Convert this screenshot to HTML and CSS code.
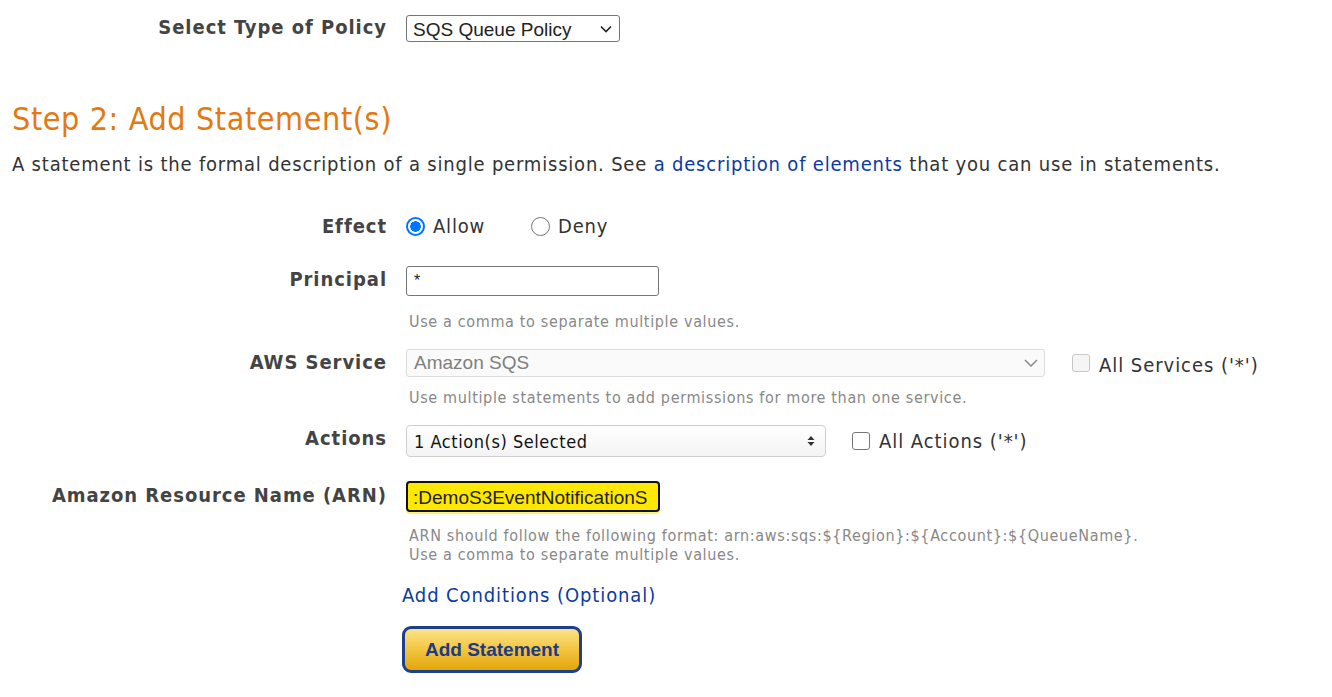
FILE: index.html
```html
<!DOCTYPE html>
<html lang="en">
<head>
<meta charset="utf-8">
<title>AWS Policy Generator</title>
<link rel="stylesheet" href="styles.css">
</head>
<body>
<div class="page">
  <div class="row row-type">
    <div class="label">Select Type of Policy</div>
    <div class="field">
      <div class="select select-type">
        <span>SQS Queue Policy</span>
        <svg class="chev" width="12" height="8" viewBox="0 0 12 8"><path d="M1 1.5 L6 6.5 L11 1.5" fill="none" stroke="#222" stroke-width="1.6"/></svg>
      </div>
    </div>
  </div>

  <h2 class="step">Step 2: Add Statement(s)</h2>
  <p class="desc">A statement is the formal description of a single permission. See <a class="link" href="#">a description of elements</a> that you can use in statements.</p>

  <div class="row row-effect">
    <div class="label">Effect</div>
    <div class="field radios">
      <span class="radio-item"><span class="radio checked"></span><span>Allow</span></span>
      <span class="radio-item deny"><span class="radio"></span><span>Deny</span></span>
    </div>
  </div>

  <div class="row row-principal">
    <div class="label">Principal</div>
    <div class="field">
      <div class="input input-principal">*</div>
      <div class="help help-principal">Use a comma to separate multiple values.</div>
    </div>
  </div>

  <div class="row row-service">
    <div class="label">AWS Service</div>
    <div class="field">
      <div class="inline">
        <div class="select select-service">
          <span>Amazon SQS</span>
          <svg class="chev" width="14" height="8" viewBox="0 0 14 8"><path d="M1 1 L7 7 L13 1" fill="none" stroke="#8a8a8a" stroke-width="1.5"/></svg>
        </div>
        <span class="check-item services"><span class="checkbox disabled"></span><span>All Services ('*')</span></span>
      </div>
      <div class="help help-service">Use multiple statements to add permissions for more than one service.</div>
    </div>
  </div>

  <div class="row row-actions">
    <div class="label">Actions</div>
    <div class="field">
      <div class="inline">
        <div class="select select-actions">
          <span>1 Action(s) Selected</span>
          <svg class="updown" width="8" height="12" viewBox="0 0 8 12"><path d="M4 1 L7.5 5 L0.5 5 Z M4 11 L7.5 7 L0.5 7 Z" fill="#333"/></svg>
        </div>
        <span class="check-item actions"><span class="checkbox"></span><span>All Actions ('*')</span></span>
      </div>
    </div>
  </div>

  <div class="row row-arn">
    <div class="label">Amazon Resource Name (ARN)</div>
    <div class="field">
      <div class="input input-arn"><span>:DemoS3EventNotificationS</span></div>
      <div class="help help-arn">ARN should follow the following format: arn:aws:sqs:${Region}:${Account}:${QueueName}.<br>Use a comma to separate multiple values.</div>
      <a class="link cond" href="#">Add Conditions (Optional)</a>
      <div><button class="btn" type="button">Add Statement</button></div>
    </div>
  </div>
</div>
</body>
</html>
```

FILE: styles.css
```css
html, body {
  margin: 0;
  padding: 0;
  background: #fff;
}
body {
  font-family: "DejaVu Sans Condensed", "DejaVu Sans", sans-serif;
  color: #333;
}
.page {
  width: 1332px;
}
.row {
  display: grid;
  grid-template-columns: 386px 1fr;
  column-gap: 20px;
  align-items: start;
}
.label {
  text-align: right;
  font-weight: bold;
  font-size: 20px;
  letter-spacing: 0.95px;
  margin-right: -1px;
  color: #444;
}
.field {
  min-width: 0;
}
.row-type {
  margin-top: 15px;
}
.row-type .label {
  line-height: 25px;
}
.select {
  box-sizing: border-box;
  display: flex;
  align-items: center;
  justify-content: space-between;
  border: 1px solid #767676;
  border-radius: 3px;
  background: #fff;
  font-family: "Liberation Sans", Arial, sans-serif;
  font-size: 19px;
  color: #222;
}
.select-type {
  width: 214px;
  height: 27px;
  padding: 0 7px 0 6px;
}
.select-type span {
  position: relative;
  top: 1px;
}
.step {
  margin: 59px 0 0 12px;
  font-weight: normal;
  font-size: 32px;
  line-height: 36px;
  letter-spacing: 0.6px;
  color: #e47911;
}
.desc {
  margin: 15px 0 0 12px;
  font-size: 20px;
  line-height: 24px;
  letter-spacing: 0.8px;
  color: #333;
}
.link {
  color: #0b3aa3;
  text-decoration: none;
}
.row-effect {
  margin-top: 38px;
}
.row-effect .label {
  line-height: 24px;
}
.radios {
  display: flex;
  align-items: center;
  height: 24px;
  font-size: 20px;
  letter-spacing: 0.8px;
  color: #333;
}
.radio-item {
  display: inline-flex;
  align-items: center;
  gap: 8px;
}
.radio-item.deny {
  margin-left: 46px;
}
.radio {
  box-sizing: border-box;
  width: 19px;
  height: 19px;
  border-radius: 50%;
  border: 1.5px solid #767676;
  background: #fff;
}
.radio.checked {
  border: 2px solid #0075ff;
  background: radial-gradient(circle, #0075ff 0 5px, #fff 5.5px);
}
.row-principal {
  margin-top: 28px;
}
.row-principal .label {
  line-height: 26px;
}
.input {
  box-sizing: border-box;
  border: 1px solid #767676;
  border-radius: 3px;
  background: #fff;
  font-family: "Liberation Sans", Arial, sans-serif;
  font-size: 19px;
  color: #222;
  overflow: hidden;
  white-space: nowrap;
}
.input-principal {
  width: 253px;
  height: 30px;
  padding: 5px 0 0 7px;
  font-size: 16px;
  line-height: 18px;
}
.help {
  padding-left: 3px;
  font-size: 16px;
  line-height: 19px;
  letter-spacing: 0.65px;
  color: #888;
}
.help-principal {
  margin-top: 16px;
}
.row-service {
  margin-top: 18px;
}
.row-service .label {
  line-height: 26px;
}
.inline {
  display: flex;
  align-items: center;
}
.select-service {
  width: 639px;
  height: 28px;
  padding: 0 6px 0 7px;
  border-color: #dcdcdc;
  background: #fafafa;
  color: #808080;
}
.check-item {
  display: inline-flex;
  align-items: center;
  gap: 9px;
  font-size: 20px;
  letter-spacing: 0.95px;
  color: #333;
}
.check-item.services {
  margin-left: 27px;
}
.check-item.services > span:last-child {
  position: relative;
  top: 2px;
}
.check-item.actions {
  margin-left: 26px;
}
.checkbox {
  box-sizing: border-box;
  width: 18px;
  height: 18px;
  border: 1.5px solid #767676;
  border-radius: 3px;
  background: #fff;
}
.checkbox.disabled {
  border-color: #c8c8c8;
  background: #f5f5f5;
}
.help-service {
  margin-top: 11px;
}
.row-actions {
  margin-top: 18px;
}
.row-actions .label {
  line-height: 26px;
}
.select-actions {
  width: 420px;
  height: 32px;
  padding: 0 10px 0 7px;
  border-color: #cfcfcf;
  border-radius: 4px;
  background: linear-gradient(#fff, #f3f3f3);
  font-family: "DejaVu Sans Condensed", "DejaVu Sans", sans-serif;
  font-size: 18px;
  letter-spacing: 0.55px;
  color: #111;
}
.row-arn {
  margin-top: 24px;
}
.row-arn .label {
  line-height: 28px;
}
.input-arn {
  width: 254px;
  height: 31px;
  padding: 4px 0 0 5px;
  border: 2px solid #111;
  border-radius: 4px;
  background: #ffe800;
  box-shadow: 0 2px 0 0 #fff176;
  line-height: 21px;
}
.help-arn {
  margin-top: 14px;
}
.cond {
  display: inline-block;
  margin: 19px 0 0 -4px;
  font-size: 20px;
  line-height: 24px;
  letter-spacing: 0.9px;
}
.btn {
  box-sizing: border-box;
  margin: 19px 0 0 -4px;
  width: 180px;
  height: 47px;
  border: 3px solid #1d3f8c;
  border-radius: 9px;
  background: linear-gradient(#fde38a, #f3c540 50%, #e2a60a);
  font-family: "Liberation Sans", Arial, sans-serif;
  font-weight: bold;
  font-size: 19px;
  color: #1d3a88;
  padding: 0;
  cursor: pointer;
}
```
